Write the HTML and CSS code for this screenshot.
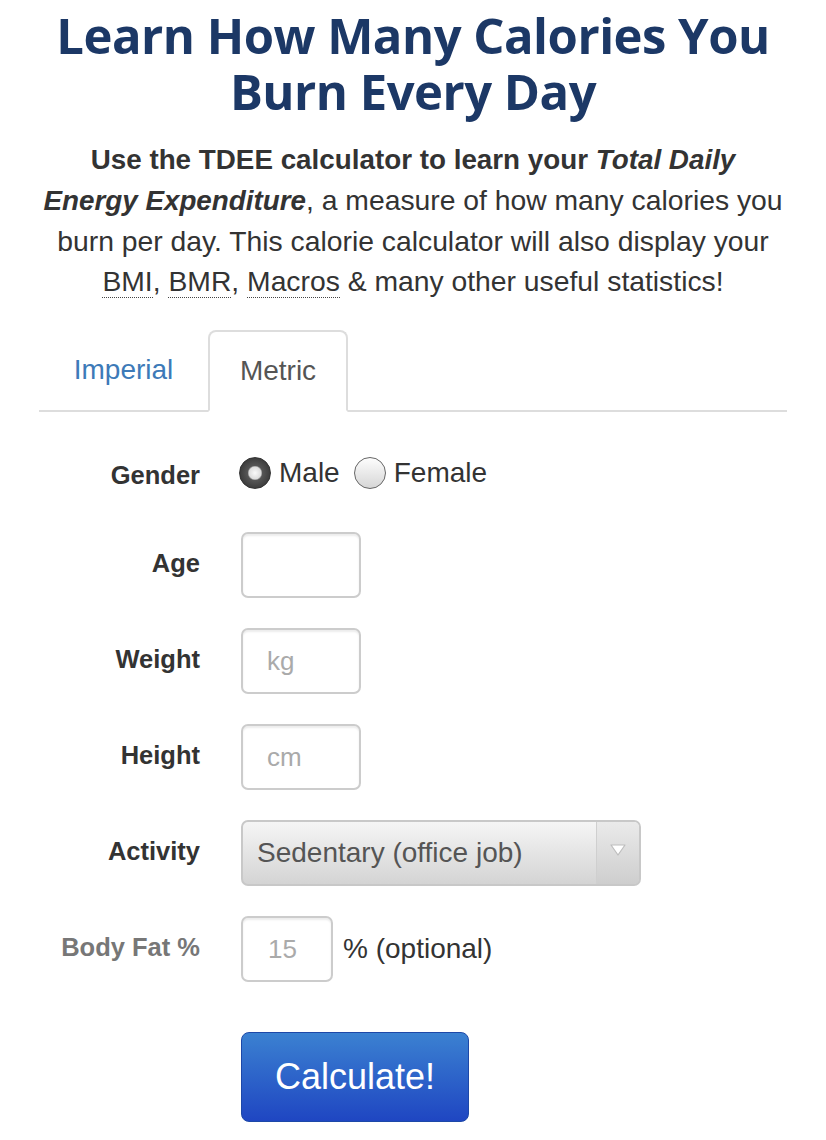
FILE: index.html
```html
<!DOCTYPE html>
<html>
<head>
<meta charset="utf-8">
<link rel="stylesheet" href="styles.css">
</head>
<body>
<div class="page">
  <h1 class="title">Learn How Many Calories You Burn Every Day</h1>
  <p class="intro"><b>Use the TDEE calculator to learn your <i>Total Daily</i><br><i>Energy Expenditure</i></b>, a measure of how many calories you<br>burn per day. This calorie calculator will also display your<br><abbr>BMI</abbr>, <abbr>BMR</abbr>, <abbr>Macros</abbr> &amp; many other useful statistics!</p>

  <div class="tabs">
    <span class="tab">Imperial</span>
    <span class="tab active">Metric</span>
  </div>

  <form class="form">
    <div class="row">
      <label class="lbl">Gender</label>
      <div class="radios">
        <span class="radio checked"></span><span class="rtext">Male</span>
        <span class="radio"></span><span class="rtext">Female</span>
      </div>
    </div>
    <div class="row">
      <label class="lbl">Age</label>
      <input class="field" type="text">
    </div>
    <div class="row">
      <label class="lbl">Weight</label>
      <input class="field" type="text" placeholder="kg">
    </div>
    <div class="row">
      <label class="lbl">Height</label>
      <input class="field" type="text" placeholder="cm">
    </div>
    <div class="row">
      <label class="lbl">Activity</label>
      <div class="select"><span class="seltext">Sedentary (office job)</span><span class="selarrow"><svg width="18" height="14" viewBox="0 0 18 14"><path d="M2 2 L16 2 L9 12 Z" fill="#fff" stroke="#bdbdbd" stroke-width="1.2" stroke-linejoin="round"/></svg></span></div>
    </div>
    <div class="row">
      <label class="lbl muted">Body Fat %</label>
      <input class="field small" type="text" placeholder="15">
      <span class="note">% (optional)</span>
    </div>
    <div class="row btnrow">
      <span class="lbl"></span>
      <button type="button" class="btn">Calculate!</button>
    </div>
  </form>
</div>
</body>
</html>
```
FILE: styles.css
```css
html, body { margin: 0; padding: 0; background: #fff; }
body { font-family: "Liberation Sans", Arial, sans-serif; color: #333; }
.page { width: 826px; }
.title {
  margin: 0;
  padding: 7px 40px 0;
  text-align: center;
  font-family: "Open Sans", sans-serif;
  font-weight: 700;
  font-size: 49px;
  line-height: 56px;
  letter-spacing: -0.5px;
  color: #1c3866;
}
.intro {
  margin: 20px 0 0;
  padding: 0 10px;
  text-align: center;
  font-size: 28.3px;
  line-height: 40px;
  color: #333;
  white-space: nowrap;
}
.intro b { font-weight: 700; font-size: 27.8px; }
.intro abbr {
  text-decoration: none;
  border-bottom: 1px dotted #444;
}
.tabs {
  display: flex;
  margin: 29px 39px 0;
  border-bottom: 2px solid #ddd;
  height: 80px;
}
.tab {
  display: flex;
  align-items: center;
  justify-content: center;
  width: 169px;
  font-size: 28px;
  color: #3d7ab8;
  box-sizing: border-box;
}
.tab.active {
  width: 140px;
  color: #555;
  border: 2px solid #ddd;
  border-bottom: 2px solid #fff;
  margin-bottom: -2px;
  height: 82px;
  border-radius: 8px 8px 0 0;
  background: #fff;
}
.form {
  margin: 30px 0 0;
  display: flex;
  flex-direction: column;
  gap: 30px;
}
.row {
  display: flex;
  align-items: center;
  min-height: 66px;
}
.row:first-child { min-height: 62px; margin-bottom: -2px; }
.lbl {
  width: 200px;
  text-align: right;
  font-weight: 700;
  font-size: 25.5px;
  color: #333;
  margin-right: 41px;
  padding-bottom: 4px;
}
.row:first-child .lbl { padding-bottom: 0; padding-top: 4px; }
.lbl.muted { color: #777; }
.radios { display: flex; align-items: center; margin-left: -2px; }
.radio {
  width: 32px; height: 32px;
  border-radius: 50%;
  box-sizing: border-box;
  border: 1.5px solid #666;
  background: linear-gradient(#fdfdfd, #d6d6d6);
  margin-right: 8px;
}
.radio.checked {
  background: radial-gradient(circle at 50% 50%, #fafafa 0, #ddd 6px, #555 7.5px, #3a3a3a 16px);
  border-color: #333;
}
.rtext { font-size: 28px; color: #333; margin-right: 14px; }
.field {
  width: 120px; height: 66px;
  box-sizing: border-box;
  border: 2px solid #ccc;
  border-radius: 7px;
  box-shadow: inset 0 2px 2px rgba(0,0,0,0.08);
  font-family: "Liberation Sans", Arial, sans-serif;
  font-size: 26px;
  padding: 0 24px;
  color: #333;
  background: #fff;
  outline: none;
}
.field::placeholder { color: #aaa; }
.field.small { width: 92px; padding: 0 25px; }
.note { font-size: 28px; color: #333; margin-left: 10px; }
.select {
  display: flex;
  width: 400px; height: 66px;
  box-sizing: border-box;
  border: 2px solid #c8c8c8;
  border-radius: 7px;
  background: linear-gradient(#f5f5f5, #d4d4d4);
  overflow: hidden;
}
.seltext {
  flex: 1;
  display: flex; align-items: center;
  padding-left: 14px;
  font-size: 28px;
  color: #555;
}
.selarrow {
  width: 42px;
  display: flex; align-items: center; justify-content: center;
  border-left: 1px solid #cfcfcf;
  background: linear-gradient(#eaeaea, #cecece);
  padding-bottom: 6px;
}
.btnrow { margin-top: 20px; }
.btn {
  width: 228px; height: 90px;
  border: 1px solid #1d48a8;
  border-radius: 8px;
  background: linear-gradient(#3b81d1, #1f46c2);
  color: #fff;
  font-family: "Liberation Sans", Arial, sans-serif;
  font-size: 36px;
  padding: 0;
}
```
